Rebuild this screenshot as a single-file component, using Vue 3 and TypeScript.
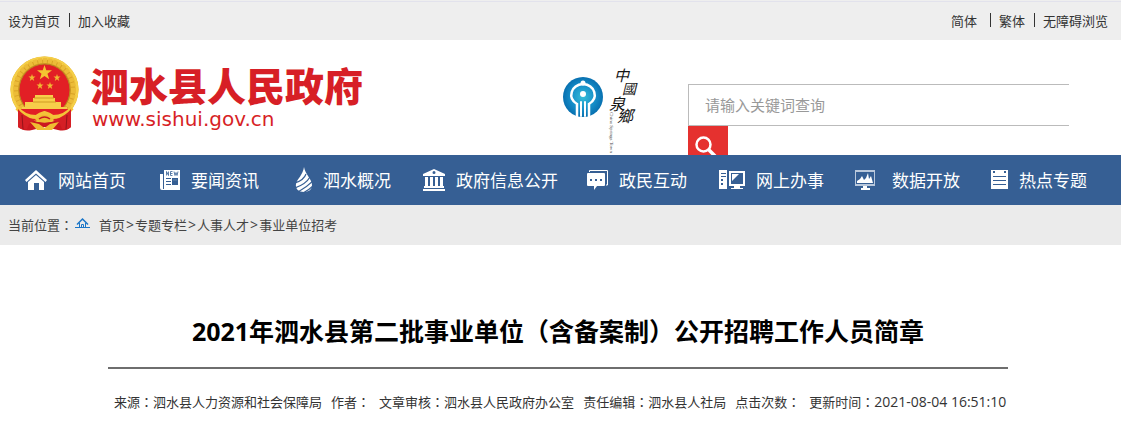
<script setup lang="ts">
import { ref } from 'vue'

interface NavItem {
  label: string
  icon: string
}

const keyword = ref('')

const navItems: NavItem[] = [
  { label: '网站首页', icon: 'home' },
  { label: '要闻资讯', icon: 'news' },
  { label: '泗水概况', icon: 'drop' },
  { label: '政府信息公开', icon: 'bank' },
  { label: '政民互动', icon: 'chat' },
  { label: '网上办事', icon: 'computer' },
  { label: '数据开放', icon: 'chart' },
  { label: '热点专题', icon: 'note' },
]

const iconWidths: Record<string, number> = {
  home: 24, news: 21, drop: 18, bank: 23, chat: 22, computer: 27, chart: 27, note: 18,
}

const crumbs: string[] = ['首页', '专题专栏', '人事人才', '事业单位招考']

const meta: { label: string; value: string }[] = [
  { label: '来源', value: '泗水县人力资源和社会保障局' },
  { label: '作者', value: '' },
  { label: '文章审核', value: '泗水县人民政府办公室' },
  { label: '责任编辑', value: '泗水县人社局' },
  { label: '点击次数', value: '' },
]
</script>

<template>
  <div class="page">
    <div class="topbar">
      <div class="links">
        <a href="#">设为首页</a>
        <a href="#" class="divided">加入收藏</a>
      </div>
      <div class="links links-right">
        <a href="#">简体</a>
        <a href="#" class="divided far">繁体</a>
        <a href="#" class="divided">无障碍浏览</a>
      </div>
    </div>

    <header class="header">
      <a href="#" class="brand">
        <svg class="emblem" width="70" height="76" viewBox="0 0 70 76" aria-hidden="true">
          <path d="M9 50L8 71Q14 76 22 74L35 71L48 74Q56 76 61 71L60 50Z" fill="#cb1820" />
          <ellipse cx="34.500" cy="33.500" rx="34" ry="33" fill="#d9a326" />
          <ellipse cx="34.500" cy="33.500" rx="32.500" ry="31.500" fill="none" stroke="#f5cf48" stroke-width="3" />
          <ellipse cx="34.500" cy="33.500" rx="29" ry="29" fill="none" stroke="#ecbc38" stroke-width="5" stroke-dasharray="4 1" />
          <ellipse cx="34.500" cy="34" rx="25.500" ry="26" fill="#e21f25" stroke="#b88720" stroke-width="1" />
          <path d="M34.500 9L36.300 14.300H42L37.500 17.800L39.200 23.200L34.500 20L29.800 23.200L31.500 17.800L27 14.300H32.700Z" fill="#f4c531" />
          <g fill="#f1b832">
            <path id="small-star" d="M22 18L22.900 20.500H25.500L23.400 22.200L24.200 24.900L22 23.300L19.800 24.900L20.600 22.200L18.500 20.500H21.100Z" />
            <use href="#small-star" x="25" />
            <use href="#small-star" x="8" y="8" />
            <use href="#small-star" x="18" y="8" />
          </g>
          <path d="M25 39H43V42H45V46H51V51H57V53H12V51H15V46H23V42H25Z" fill="#f7ce4a" />
          <path d="M24 42H44M23 46H46" stroke="#d09b22" stroke-width="1" />
          <path d="M10 53H59Q54 62 44 65L35 58L26 65Q15 62 10 53Z" fill="#e21f25" />
          <path d="M7 52Q14 61 26 61Q30 58 34.500 57Q39 58 43 61Q55 61 62 52" fill="none" stroke="#f3c438" stroke-width="4" />
          <path d="M8 53Q13 60 25 64L19 68L17 73Q11 74 8 71ZM61 53Q56 60 44 64L50 68L52 73Q58 74 61 71Z" fill="#d51f25" />
          <path d="M12 59L13 73M57 59L56 73" stroke="#96131a" stroke-width="1" />
          <path d="M25 64Q29 59 34.500 59Q40 59 44 64L39 66H30Z" fill="#efbd32" />
          <path d="M29 63Q34.500 59 40 63" fill="none" stroke="#c91b20" stroke-width="1.500" />
          <path d="M20 66L27 74H42L49 66L40 68L34.500 72L29 68Z" fill="#efbd32" />
        </svg>
        <span class="brand-text">
          <span class="brand-name">泗水县人民政府</span>
          <span class="brand-url">www.sishui.gov.cn</span>
        </span>
      </a>

      <svg class="spring" width="80" height="90" viewBox="0 0 80 90" role="img" aria-label="中國泉鄉">
        <defs>
          <radialGradient id="spring-blue">
            <stop offset="0" stop-color="#36bdd8" />
            <stop offset="0.6" stop-color="#168fc9" />
            <stop offset="1" stop-color="#0870b0" />
          </radialGradient>
        </defs>
        <circle cx="21" cy="33" r="20" fill="url(#spring-blue)" />
        <g fill="none" stroke="#fff" stroke-width="2.500" stroke-linecap="round">
          <path d="M15 52V40C5 34 9 21 21 20C33 21 37 34 27 40V52" />
          <path d="M19 52V38M23 52V38" stroke-width="2" />
        </g>
        <circle cx="21" cy="30" r="3" fill="#fff" />
        <circle cx="21" cy="19" r="2.500" fill="#fff" />
        <g class="spring-title">
          <text x="52" y="17" font-size="15">中</text>
          <text x="60" y="30" font-size="14">國</text>
          <text x="47" y="46" font-size="16">泉</text>
          <text x="55" y="58" font-size="16">鄉</text>
        </g>
        <text class="spring-sub" transform="translate(48 48) rotate(90)">China Springs Town</text>
      </svg>

      <form class="search" @submit.prevent>
        <input v-model="keyword" type="text" aria-label="请输入关键词查询" placeholder="请输入关键词查询" />
        <button type="submit" aria-label="搜索">
          <svg width="40" height="40" viewBox="0 0 40 40" fill="none" stroke="#fff" aria-hidden="true">
            <circle cx="15.500" cy="18.500" r="7" stroke-width="2.500" />
            <path d="M20 23L28 31" stroke-width="3.500" />
          </svg>
        </button>
      </form>
    </header>

    <nav class="nav">
      <a v-for="item in navItems" :key="item.icon" href="#">
        <svg :width="iconWidths[item.icon]" height="26" :viewBox="`0 0 ${iconWidths[item.icon]} 26`" fill="#fff" aria-hidden="true">
          <template v-if="item.icon === 'home'">
            <path d="M12 3L23 13L21.500 15L12 6.500L2.500 15L1 13Z" />
            <path d="M4 15L12 8L20 15V23H15V16H10V23H4Z" />
          </template>
          <template v-else-if="item.icon === 'news'">
            <path d="M0 7H3V22H20V23H2Q0 23 0 21Z" />
            <path fill-rule="evenodd" d="M4 3H20V22H4ZM6 11V12H11V11ZM6 14V15H11V14ZM6 17V18H11V17ZM12 11V18H18V11Z" />
            <path d="M6.500 8.500V4.500L8.500 8.500V4.500M12.500 4.500H10.500V8.500H12.500M10.500 6.500H12.500M14 4.500L15 8.500L16 5.500L17 8.500L18 4.500" fill="none" stroke="#365f94" stroke-width="0.800" />
            <path d="M13 12H17V14H13Z" fill="#4e739f" />
          </template>
          <template v-else-if="item.icon === 'drop'">
            <path d="M9 0C10 7 17 12 17 18C17 23 13 25 9 25C4 25 0 22 1 17C2 12 8 8 9 0Z" />
            <path d="M0 16Q9 13 11 7M0 21Q11 17 15 10M3 25Q12 20 18 14M8 26Q14 23 18 19" fill="none" stroke="#365f94" stroke-width="1.200" />
          </template>
          <template v-else-if="item.icon === 'bank'">
            <path fill-rule="evenodd" d="M11 2L22 7V9H0V7ZM11 4A1.500 1.500 0 1 0 11 7A1.500 1.500 0 1 0 11 4Z" />
            <path d="M2 10H5V20H2ZM7 10H10V20H7ZM12 10H15V20H12ZM17 10H20V20H17ZM1 19H21V21H1ZM0 22H22V24H0Z" />
          </template>
          <template v-else-if="item.icon === 'chat'">
            <path d="M2.500 5V3.500H20.500V18H19" fill="none" stroke="#fff" />
            <path d="M1 6H17Q18 6 18 7V18Q18 19 17 19H10L7 23V19H1Q0 19 0 18V7Q0 6 1 6Z" />
            <path d="M3 12H5V14H3ZM8 12H10V14H8ZM13 12H15V14H13Z" fill="#365f94" />
          </template>
          <template v-else-if="item.icon === 'computer'">
            <path fill-rule="evenodd" d="M0 3H8V22H0ZM2 6V7H7V6ZM2 9V10H7V9ZM2 12V14H4V12ZM2 16V18H4V16Z" />
            <path fill-rule="evenodd" d="M10 4H26V19H21V21H24V22H12V21H15V19H10ZM12 6V17H24V6Z" />
            <path d="M13 7H20L13 14Z" />
          </template>
          <template v-else-if="item.icon === 'chart'">
            <path fill="#b9c8dc" fill-rule="evenodd" d="M0 3H20V19H12V21H15V23H6V21H9V19H0ZM1 5V17H19V5Z" />
            <path d="M2 16V14L5 12L7 9L9 13L11 11L13 6L14 12L16 9L18 16Z" />
            <path d="M8 19H12V21H15V23H6V21H8Z" />
          </template>
          <template v-else>
            <path fill-rule="evenodd" d="M0 3H17V22H0ZM2 9V10H15V9ZM2 13V14H15V13ZM2 17V18H15V17Z" />
            <path d="M2 4H4V6H2ZM13 4H15V6H13Z" fill="#365f94" />
          </template>
        </svg>
        <span>{{ item.label }}</span>
      </a>
    </nav>

    <div class="crumbs">
      <span>当前位置<span class="colon">：</span></span>
      <svg width="16" height="12" viewBox="0 0 16 12" fill="none" stroke="#1b76c8" aria-hidden="true">
        <path d="M0 10.500H15M4.500 6V10M10.500 6V10M6.500 10V7.500H8.500V10" />
        <path d="M2 7.500L7.500 2L13 7.500" stroke-width="1.500" />
      </svg>
      <template v-for="(crumb, i) in crumbs" :key="crumb">
        <span v-if="i > 0" class="sep">&gt;</span>
        <a href="#">{{ crumb }}</a>
      </template>
    </div>

    <main class="article">
      <h1>2021年泗水县第二批事业单位（含备案制）公开招聘工作人员简章</h1>
      <div class="meta">
        <span v-for="m in meta" :key="m.label">{{ m.label }}<span class="colon">：</span>{{ m.value }}</span>
        <span>更新时间<span class="colon">：</span><time datetime="2021-08-04T16:51:10">2021-08-04 16:51:10</time></span>
      </div>
    </main>
  </div>
</template>

<style>
body {
  margin: 0;
  background: #fff;
}
</style>

<style scoped>
.page {
  font: 13px/20px "Open Sans", "Noto Sans CJK SC", sans-serif;
  color: #333;
}

a {
  color: inherit;
  text-decoration: none;
}

.topbar {
  display: flex;
  justify-content: space-between;
  box-sizing: border-box;
  height: 40px;
  padding: 11px 13px 0 8px;
  background: linear-gradient(#eee 1px, #e2e2ec 1px, #e2e2ec 2px, #eee 2px);
}

.links {
  display: flex;
}

.divided {
  display: flex;
  margin-left: 9px;
}

.divided::before {
  content: "";
  width: 1px;
  height: 14px;
  margin: 2px 8px 0 0;
  background: #333;
}

.far {
  margin-left: 13px;
}

.header {
  display: flex;
  height: 115px;
  overflow: hidden;
}

.brand {
  display: flex;
  flex: none;
  width: 552px;
  padding: 16px 0 0 10px;
  color: #d71f26;
}

.brand-text {
  display: flex;
  flex-direction: column;
  padding: 8px 0 0 10px;
}

.brand-name {
  font-size: 39px;
  line-height: 44px;
  font-weight: 900;
}

.brand-url {
  padding-left: 2px;
  font: 20px/22px "DejaVu Sans", sans-serif;
}

.spring {
  flex: none;
  margin-top: 24px;
}

.spring-title {
  font-family: "Liberation Serif", "Noto Sans CJK TC", serif;
  font-style: italic;
  fill: #151515;
}

.spring-sub {
  font: 5px "Liberation Serif", serif;
  fill: #444;
}

.search {
  flex: 1;
  margin: 44px 52px 0 46px;
}

.search input {
  display: block;
  box-sizing: border-box;
  width: 100%;
  height: 42px;
  padding: 0 16px;
  border: 1px solid #bbb;
  border-right: 0;
  outline: 0;
  font: 15px/20px "Open Sans", "Noto Sans CJK SC", sans-serif;
}

.search input::placeholder {
  color: #999;
}

.search button {
  display: block;
  width: 40px;
  height: 40px;
  padding: 0;
  border: 0;
  background: #e5312f;
}

.nav {
  display: grid;
  grid-template-columns: 126fr 133fr 132fr 167fr 129fr 137fr 136fr 127fr 34fr;
  height: 50px;
  background: #365f94;
  color: #fff;
  font-size: 17px;
}

.nav a {
  display: flex;
  align-items: center;
  justify-content: flex-end;
  gap: 10px;
  white-space: nowrap;
}

.nav span {
  padding-top: 2px;
}

.crumbs {
  display: flex;
  align-items: center;
  height: 40px;
  padding: 0 8px;
  background: #ebebeb;
  color: #444;
}

.crumbs svg {
  margin: 0 8px 4px 2px;
}

.sep {
  padding: 0 1px;
  font-size: 14px;
}

.colon {
  font-family: "Noto Sans CJK JP", sans-serif;
}

.article {
  max-width: 900px;
  margin: 0 auto;
  padding: 66px 5px 0 0;
}

h1 {
  margin: 0;
  padding-bottom: 16px;
  border-bottom: 2px solid #6e6e6e;
  color: #000;
  font-size: 25px;
  line-height: 40px;
  text-align: center;
  white-space: nowrap;
}

.meta {
  display: flex;
  gap: 9px;
  padding: 23px 0 0 6px;
  white-space: nowrap;
}

time {
  font-size: 14px;
}
</style>
